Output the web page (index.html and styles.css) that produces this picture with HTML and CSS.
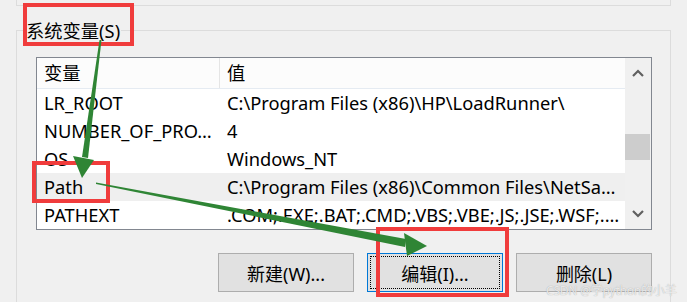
FILE: index.html
```html
<!DOCTYPE html>
<html>
<head>
    <title>环境变量</title>
    <link rel="stylesheet" href="styles.css">
</head>
<body>
    <div class="prev-group"></div>

    <div class="group">
        <div class="group-label">系统变量(S)</div>

        <div class="listview">
            <div class="list-body">
                <div class="list-head">
                    <span class="col-name">变量</span>
                    <span class="col-value">值</span>
                </div>
                <div class="list-row">
                    <span class="col-name">LR_ROOT</span>
                    <span class="col-value">C:\Program Files (x86)\HP\LoadRunner\</span>
                </div>
                <div class="list-row">
                    <span class="col-name">NUMBER_OF_PRO…</span>
                    <span class="col-value">4</span>
                </div>
                <div class="list-row">
                    <span class="col-name">OS</span>
                    <span class="col-value">Windows_NT</span>
                </div>
                <div class="list-row selected">
                    <span class="col-name">Path</span>
                    <span class="col-value">C:\Program Files (x86)\Common Files\NetSa…</span>
                </div>
                <div class="list-row">
                    <span class="col-name">PATHEXT</span>
                    <span class="col-value">.COM;.EXE;.BAT;.CMD;.VBS;.VBE;.JS;.JSE;.WSF;.…</span>
                </div>
            </div>

            <div class="scrollbar">
                <div class="scroll-btn">
                    <svg width="12" height="8" viewBox="0 0 12 8"><polyline points="1,7 6,2 11,7" /></svg>
                </div>
                <div class="scroll-track">
                    <div class="scroll-thumb"></div>
                </div>
                <div class="scroll-btn">
                    <svg width="12" height="8" viewBox="0 0 12 8"><polyline points="1,1 6,6 11,1" /></svg>
                </div>
            </div>
        </div>

        <div class="buttons">
            <button class="win-btn">新建(W)...</button>
            <button class="win-btn focused">编辑(I)...</button>
            <button class="win-btn">删除(L)</button>
        </div>
    </div>

    <!-- annotations drawn over the dialog -->
    <svg class="annotations" width="687" height="302" viewBox="0 0 687 302">
        <rect x="25" y="5" width="107" height="39" />
        <rect x="34" y="163" width="74" height="38" />
        <rect x="378" y="229" width="129" height="66" />
        <polygon class="arrow" points="99.5,40 101.5,40 88,158 82,157" />
        <polygon class="arrow" points="73,156 94,160 82,178" />
        <polygon class="arrow" points="96,182.5 96,184 405,247 406,239" />
        <polygon class="arrow" points="404,233 407,256 427,246" />
    </svg>

    <div class="watermark">CSDN @学python的小羊</div>
</body>
</html>
```

FILE: styles.css
```css
body {
    margin: 0;
    width: 687px;
    height: 302px;
    overflow: hidden;
    position: relative;
    background: #f0f0f0;
    font-family: "Noto Sans", "Noto Sans CJK SC", sans-serif;
    font-size: 18.3px;
    color: #000;
}

.prev-group {
    height: 5px;
    margin: 0 16px;
    border: 1px solid #dcdcdc;
    border-top: none;
}

.group {
    margin: 24px 16px 0;
    height: 271px;
    padding: 0 18px 0 19px;
    border: 1px solid #dcdcdc;
    border-bottom: none;
}

.group-label {
    width: fit-content;
    margin: -13px 0 0 -11px;
    padding: 0 1px;
    line-height: 26px;
    background: #f0f0f0;
}

.listview {
    margin-top: 13px;
    display: flex;
    border: 1px solid #828790;
    background: #fff;
}

.list-body {
    flex: 1;
}

.list-head,
.list-row {
    display: flex;
    white-space: nowrap;
}

.list-head {
    height: 30px;
    line-height: 30px;
    background: #fcfcfc;
    border-bottom: 1px solid #e5ebf2;
}

.list-head .col-name {
    border-right: 1px solid #e5e5e5;
}

.list-row {
    height: 28px;
    line-height: 28px;
}

.list-row.selected {
    background: #efefef;
}

.col-name {
    width: 183px;
    box-sizing: border-box;
    padding-left: 7px;
    overflow: hidden;
}

.col-value {
    padding-left: 7px;
}

.scrollbar {
    width: 26px;
    display: flex;
    flex-direction: column;
    background: #f0f0f0;
}

.scroll-btn {
    height: 30px;
    display: flex;
    align-items: center;
    justify-content: center;
}

.scroll-btn svg polyline {
    fill: none;
    stroke: #606060;
    stroke-width: 2.2;
}

.scroll-track {
    flex: 1;
}

.scroll-thumb {
    margin: 46px 1px 0 0;
    height: 26px;
    background: #cdcdcd;
}

.buttons {
    display: flex;
    justify-content: flex-end;
    gap: 13px;
    margin-top: 23px;
}

.win-btn {
    width: 136px;
    height: 39px;
    padding: 0;
    background: #e1e1e1;
    border: 1px solid #adadad;
    font-family: inherit;
    font-size: 18px;
    color: #000;
}

.win-btn.focused {
    border-color: #0078d7;
    outline: 1px dotted #000;
    outline-offset: -4px;
}

.annotations {
    position: absolute;
    top: 0;
    left: 0;
    pointer-events: none;
}

.annotations rect {
    fill: none;
    stroke: #f03c3c;
    stroke-width: 4;
}

.annotations .arrow {
    fill: #2f8535;
}

.watermark {
    position: absolute;
    left: 546px;
    top: 284px;
    font-size: 12px;
    line-height: 14px;
    letter-spacing: -0.2px;
    color: rgba(255, 255, 255, 0.75);
    text-shadow: 0 0 1px #9a9a9a;
    white-space: nowrap;
}
```
